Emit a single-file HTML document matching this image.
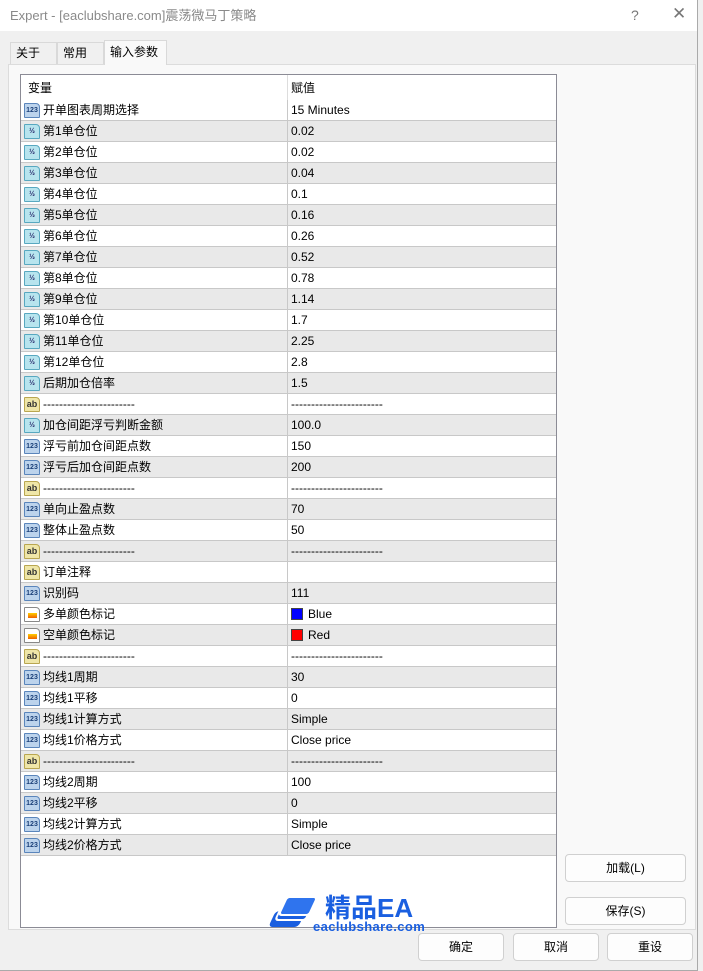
<!DOCTYPE html>
<html><head><meta charset="utf-8">
<style>
*{box-sizing:border-box;margin:0;padding:0}
body{width:703px;height:971px;background:#f0f0f0;font-family:"Liberation Sans","Noto Sans CJK SC",sans-serif;font-size:12px;color:#000;position:relative;overflow:hidden}
.win{position:absolute;left:0;top:0;width:698px;height:971px;background:#f0f0f0;border-right:1px solid #aaa;border-bottom:1px solid #aaa}
.title{position:absolute;left:0;top:0;width:697px;height:31px;background:#fff;color:#8a8a8a;font-size:13px;line-height:31px;padding-left:10px}
.q{position:absolute;left:631px;top:7px;color:#777;font-size:14px}
.x{position:absolute;left:672px;top:4px;color:#777;font-size:17px}
.tab{position:absolute;top:42px;height:22px;border:1px solid #d9d9d9;border-bottom:none;background:#f0f0f0;padding-left:5px;line-height:21px;font-size:12px}
.tab.act{background:#f9f9f9;top:40px;height:25px;line-height:23px}
.panel{position:absolute;left:8px;top:64px;width:688px;height:866px;background:#f9f9f9;border:1px solid #dcdcdc}
.tbl{position:absolute;left:20px;top:74px;width:537px;height:854px;background:#fff;border:1px solid #8b8b95}
.hdr{position:absolute;left:0;top:0;width:535px;height:25px}
.hdr span{position:absolute;top:2px;line-height:22px}
.vd{position:absolute;left:266px;top:0;width:1px;height:25px;background:#ddd}
.row{position:absolute;left:0;width:535px;height:21px;border-bottom:1px solid #c8c8c8}
.row.g{background:#e9e9e9}
.row .n{position:absolute;left:22px;top:0;line-height:20px;white-space:nowrap}
.row .v{position:absolute;left:270px;top:0;line-height:20px;white-space:nowrap}
.row .d{position:absolute;left:266px;top:0;width:1px;height:21px;background:#c8c8c8}
.ic{position:absolute;left:3px;top:3px;width:16px;height:15px;border-radius:1px 4px 1px 1px;font-size:7px;font-weight:bold;line-height:13px;text-align:center;font-family:"Liberation Sans",sans-serif;font-style:normal}
.i1{background:#bcd3ec;border:1px solid #5a85bb;color:#1a3f78}
.i2{background:#b7e4ee;border:1px solid #58a8c0;color:#226}
.i3{background:#efe6a8;border:1px solid #b9a650;color:#333;font-size:9px}
.i4{background:#fff;border:1px solid #888}
.i4:after{content:"";position:absolute;left:3px;top:5px;width:9px;height:5px;background:linear-gradient(#ffd000,#f06000)}
.sw{display:inline-block;width:12px;height:12px;vertical-align:-2px;margin-right:5px;border:1px solid #444}
.btn{position:absolute;height:28px;background:#fdfdfd;border:1px solid #d0d0d0;border-radius:4px;text-align:center;line-height:26px;font-size:12px}
.logo{position:absolute;left:270px;top:893px}
</style></head><body>
<div class="win">
<div class="title">Expert - [eaclubshare.com]震荡微马丁策略</div>
<div class="q">?</div><div class="x">✕</div>
<div class="panel"></div>
<div class="tab" style="left:10px;width:47px">关于</div>
<div class="tab" style="left:57px;width:47px">常用</div>
<div class="tab act" style="left:104px;width:63px">输入参数</div>
<div class="tbl">
<div class="hdr"><span style="left:7px">变量</span><div class="vd"></div><span style="left:270px">赋值</span></div>
<div class="row" style="top:25px"><i class="ic i1">123</i><span class="n">开单图表周期选择</span><div class="d"></div><span class="v">15 Minutes</span></div>
<div class="row g" style="top:46px"><i class="ic i2">½</i><span class="n">第1单仓位</span><div class="d"></div><span class="v">0.02</span></div>
<div class="row" style="top:67px"><i class="ic i2">½</i><span class="n">第2单仓位</span><div class="d"></div><span class="v">0.02</span></div>
<div class="row g" style="top:88px"><i class="ic i2">½</i><span class="n">第3单仓位</span><div class="d"></div><span class="v">0.04</span></div>
<div class="row" style="top:109px"><i class="ic i2">½</i><span class="n">第4单仓位</span><div class="d"></div><span class="v">0.1</span></div>
<div class="row g" style="top:130px"><i class="ic i2">½</i><span class="n">第5单仓位</span><div class="d"></div><span class="v">0.16</span></div>
<div class="row" style="top:151px"><i class="ic i2">½</i><span class="n">第6单仓位</span><div class="d"></div><span class="v">0.26</span></div>
<div class="row g" style="top:172px"><i class="ic i2">½</i><span class="n">第7单仓位</span><div class="d"></div><span class="v">0.52</span></div>
<div class="row" style="top:193px"><i class="ic i2">½</i><span class="n">第8单仓位</span><div class="d"></div><span class="v">0.78</span></div>
<div class="row g" style="top:214px"><i class="ic i2">½</i><span class="n">第9单仓位</span><div class="d"></div><span class="v">1.14</span></div>
<div class="row" style="top:235px"><i class="ic i2">½</i><span class="n">第10单仓位</span><div class="d"></div><span class="v">1.7</span></div>
<div class="row g" style="top:256px"><i class="ic i2">½</i><span class="n">第11单仓位</span><div class="d"></div><span class="v">2.25</span></div>
<div class="row" style="top:277px"><i class="ic i2">½</i><span class="n">第12单仓位</span><div class="d"></div><span class="v">2.8</span></div>
<div class="row g" style="top:298px"><i class="ic i2">½</i><span class="n">后期加仓倍率</span><div class="d"></div><span class="v">1.5</span></div>
<div class="row" style="top:319px"><i class="ic i3">ab</i><span class="n">-----------------------</span><div class="d"></div><span class="v">-----------------------</span></div>
<div class="row g" style="top:340px"><i class="ic i2">½</i><span class="n">加仓间距浮亏判断金额</span><div class="d"></div><span class="v">100.0</span></div>
<div class="row" style="top:361px"><i class="ic i1">123</i><span class="n">浮亏前加仓间距点数</span><div class="d"></div><span class="v">150</span></div>
<div class="row g" style="top:382px"><i class="ic i1">123</i><span class="n">浮亏后加仓间距点数</span><div class="d"></div><span class="v">200</span></div>
<div class="row" style="top:403px"><i class="ic i3">ab</i><span class="n">-----------------------</span><div class="d"></div><span class="v">-----------------------</span></div>
<div class="row g" style="top:424px"><i class="ic i1">123</i><span class="n">单向止盈点数</span><div class="d"></div><span class="v">70</span></div>
<div class="row" style="top:445px"><i class="ic i1">123</i><span class="n">整体止盈点数</span><div class="d"></div><span class="v">50</span></div>
<div class="row g" style="top:466px"><i class="ic i3">ab</i><span class="n">-----------------------</span><div class="d"></div><span class="v">-----------------------</span></div>
<div class="row" style="top:487px"><i class="ic i3">ab</i><span class="n">订单注释</span><div class="d"></div><span class="v"></span></div>
<div class="row g" style="top:508px"><i class="ic i1">123</i><span class="n">识别码</span><div class="d"></div><span class="v">111</span></div>
<div class="row" style="top:529px"><i class="ic i4"></i><span class="n">多单颜色标记</span><div class="d"></div><span class="v"><i class="sw" style="background:#00f"></i>Blue</span></div>
<div class="row g" style="top:550px"><i class="ic i4"></i><span class="n">空单颜色标记</span><div class="d"></div><span class="v"><i class="sw" style="background:#f00"></i>Red</span></div>
<div class="row" style="top:571px"><i class="ic i3">ab</i><span class="n">-----------------------</span><div class="d"></div><span class="v">-----------------------</span></div>
<div class="row g" style="top:592px"><i class="ic i1">123</i><span class="n">均线1周期</span><div class="d"></div><span class="v">30</span></div>
<div class="row" style="top:613px"><i class="ic i1">123</i><span class="n">均线1平移</span><div class="d"></div><span class="v">0</span></div>
<div class="row g" style="top:634px"><i class="ic i1">123</i><span class="n">均线1计算方式</span><div class="d"></div><span class="v">Simple</span></div>
<div class="row" style="top:655px"><i class="ic i1">123</i><span class="n">均线1价格方式</span><div class="d"></div><span class="v">Close price</span></div>
<div class="row g" style="top:676px"><i class="ic i3">ab</i><span class="n">-----------------------</span><div class="d"></div><span class="v">-----------------------</span></div>
<div class="row" style="top:697px"><i class="ic i1">123</i><span class="n">均线2周期</span><div class="d"></div><span class="v">100</span></div>
<div class="row g" style="top:718px"><i class="ic i1">123</i><span class="n">均线2平移</span><div class="d"></div><span class="v">0</span></div>
<div class="row" style="top:739px"><i class="ic i1">123</i><span class="n">均线2计算方式</span><div class="d"></div><span class="v">Simple</span></div>
<div class="row g" style="top:760px"><i class="ic i1">123</i><span class="n">均线2价格方式</span><div class="d"></div><span class="v">Close price</span></div>
</div>
<div class="btn" style="left:565px;top:854px;width:121px">加载(L)</div>
<div class="btn" style="left:565px;top:897px;width:121px">保存(S)</div>
<div class="btn" style="left:418px;top:933px;width:86px">确定</div>
<div class="btn" style="left:513px;top:933px;width:86px">取消</div>
<div class="btn" style="left:607px;top:933px;width:86px">重设</div>
<div class="logo">
<div style="position:absolute;left:2px;top:18px;width:30px;height:16px;background:#1a5fe0;transform:skewX(-25deg);border-radius:4px"></div>
<div style="position:absolute;left:8px;top:10px;width:32px;height:18px;background:#1a5fe0;transform:skewX(-25deg);border-radius:4px;border:2px solid #fff"></div>
<div style="position:absolute;left:12px;top:3px;width:32px;height:20px;background:#2f74ee;transform:skewX(-25deg);border-radius:4px;border:2px solid #fff"></div>
<div style="position:absolute;left:55px;top:0;color:#1a5fe0;font-size:26px;line-height:30px;font-weight:bold;white-space:nowrap">精品EA</div>
<div style="position:absolute;left:43px;top:27px;color:#1a5fe0;font-size:13px;line-height:14px;font-weight:bold;white-space:nowrap;letter-spacing:0.4px">eaclubshare.com</div>
</div>
</div>
</body></html>
